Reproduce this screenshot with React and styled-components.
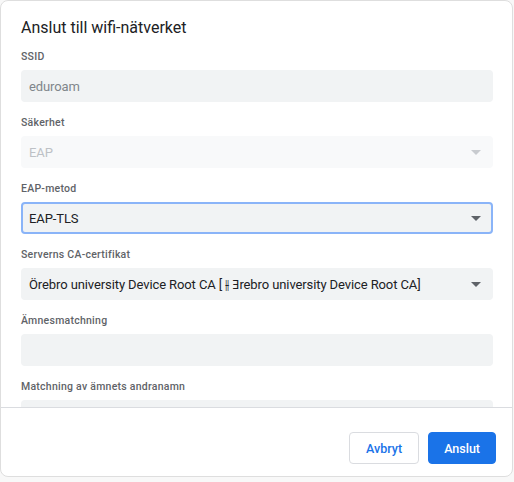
import React from 'react';
import styled, { createGlobalStyle } from 'styled-components';

const GlobalStyle = createGlobalStyle`
  html, body {
    margin: 0;
    padding: 0;
    background: #f8f8f8;
    font-family: Roboto, "Noto Sans", "DejaVu Sans", sans-serif;
  }
`;

const Dialog = styled.div`
  width: 511px;
  height: 475px;
  background: #fff;
  border: 1px solid #dedede;
  border-radius: 8px;
  display: flex;
  flex-direction: column;
  overflow: hidden;
`;

const Body = styled.div`
  flex: 0 0 406px;
  overflow: hidden;
  padding: 15px 19px 0 20px;
  box-sizing: border-box;
`;

const Title = styled.h1`
  margin: 2px 0 11px;
  font-size: 16px;
  line-height: 20px;
  font-weight: 400;
  color: #202124;
`;

const Field = styled.div`
  display: flex;
  flex-direction: column;
  margin-bottom: 13px;
`;

const Label = styled.label`
  font-size: 10.5px;
  line-height: 16px;
  font-weight: 500;
  letter-spacing: 0.25px;
  color: #5f6368;
  margin-bottom: 5px;
`;

const Box = styled.div`
  height: 32px;
  box-sizing: border-box;
  border-radius: 4px;
  background: ${p => (p.$disabled ? '#f8f9fa' : '#f1f3f4')};
  border: ${p => (p.$focused ? '2px solid #8ab4f8' : 'none')};
  padding: 0 ${p => (p.$focused ? 10 : 12)}px 0 ${p => (p.$focused ? 6 : 8)}px;
  display: flex;
  align-items: center;
  font-size: 13px;
  letter-spacing: -0.1px;
  color: ${p => (p.$muted ? '#80868b' : p.$disabled ? '#bdc1c6' : '#202124')};
`;

const Value = styled.span`
  flex: 1;
  white-space: nowrap;
  overflow: hidden;
`;

const Arrow = styled.span`
  width: 0;
  height: 0;
  border-left: 5px solid transparent;
  border-right: 5px solid transparent;
  border-top: 5px solid ${p => (p.$disabled ? '#c8cbcf' : '#5f6368')};
`;

const Footer = styled.div`
  flex: 1;
  border-top: 1px solid #dadce0;
  display: flex;
  justify-content: flex-end;
  align-items: flex-start;
  gap: 9px;
  padding: 24px 16px 0 0;
`;

const Button = styled.button`
  height: 32px;
  box-sizing: border-box;
  padding: 0 ${p => (p.$primary ? 15 : 16)}px;
  border-radius: 4px;
  font-family: inherit;
  font-size: 12.5px;
  font-weight: 500;
  cursor: pointer;
  border: 1px solid ${p => (p.$primary ? '#1a73e8' : '#dadce0')};
  background: ${p => (p.$primary ? '#1a73e8' : '#fff')};
  color: ${p => (p.$primary ? '#fff' : '#1a73e8')};
`;

function Select({ value, disabled, focused }) {
  return (
    <Box $disabled={disabled} $focused={focused}>
      <Value>{value}</Value>
      <Arrow $disabled={disabled} />
    </Box>
  );
}

export default function App() {
  return (
    <>
      <GlobalStyle />
      <Dialog>
        <Body>
          <Title>Anslut till wifi-nätverket</Title>
          <Field>
            <Label>SSID</Label>
            <Box $muted>eduroam</Box>
          </Field>
          <Field>
            <Label>Säkerhet</Label>
            <Select value="EAP" disabled />
          </Field>
          <Field>
            <Label>EAP-metod</Label>
            <Select value="EAP-TLS" focused />
          </Field>
          <Field>
            <Label>Serverns CA-certifikat</Label>
            <Select value={'Örebro university Device Root CA [ \u2AF2 \u018Erebro university Device Root CA]'} />
          </Field>
          <Field>
            <Label>Ämnesmatchning</Label>
            <Box />
          </Field>
          <Field>
            <Label>Matchning av ämnets andranamn</Label>
            <Box />
          </Field>
        </Body>
        <Footer>
          <Button>Avbryt</Button>
          <Button $primary>Anslut</Button>
        </Footer>
      </Dialog>
    </>
  );
}
